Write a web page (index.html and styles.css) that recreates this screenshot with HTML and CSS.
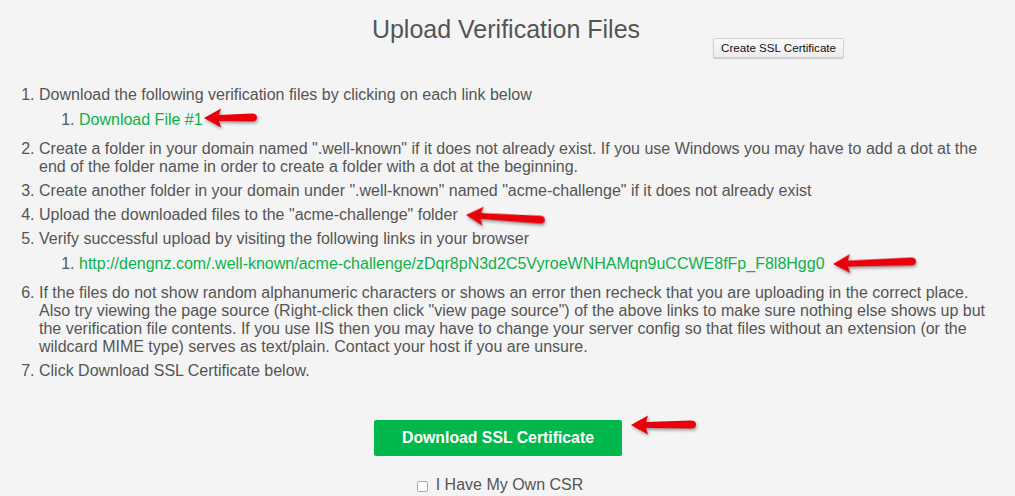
FILE: index.html
```html
<!DOCTYPE html>
<html>
<head>
<meta charset="utf-8">
<link rel="stylesheet" href="styles.css">
</head>
<body>
<div class="page">
  <header class="header">
    <div class="spacer"></div>
    <h1 class="title">Upload Verification Files</h1>
    <div class="side"><button class="btn-small">Create SSL Certificate</button></div>
  </header>

  <ol class="steps">
    <li>Download the following verification files by clicking on each link below
      <ol class="sub">
        <li><a class="link" href="#">Download File #1</a></li>
      </ol>
    </li>
    <li>Create a folder in your domain named ".well-known" if it does not already exist. If you use Windows you may have to add a dot at the end of the folder name in order to create a folder with a dot at the beginning.</li>
    <li>Create another folder in your domain under ".well-known" named "acme-challenge" if it does not already exist</li>
    <li>Upload the downloaded files to the "acme-challenge" folder</li>
    <li>Verify successful upload by visiting the following links in your browser
      <ol class="sub">
        <li><a class="link" href="#">http://dengnz.com/.well-known/acme-challenge/zDqr8pN3d2C5VyroeWNHAMqn9uCCWE8fFp_F8l8Hgg0</a></li>
      </ol>
    </li>
    <li>If the files do not show random alphanumeric characters or shows an error then recheck that you are uploading in the correct place. Also try viewing the page source (Right-click then click "view page source") of the above links to make sure nothing else shows up but the verification file contents. If you use IIS then you may have to change your server config so that files without an extension (or the wildcard MIME type) serves as text/plain. Contact your host if you are unsure.</li>
    <li>Click Download SSL Certificate below.</li>
  </ol>

  <div class="actions">
    <button class="btn-green">Download SSL Certificate</button>
    <label class="csr"><input type="checkbox" class="check"> I Have My Own CSR</label>
  </div>

  <svg class="arrow a1" width="56" height="24" viewBox="0 0 56 24"><path d="M1 12 L18 2.5 L16 9 L49 7.5 Q54 7.5 54 11.5 Q54 15.5 49 15.5 L16 15 L18 21.5 Z"/></svg>
  <svg class="arrow a2" width="82" height="24" viewBox="0 0 82 24"><path d="M1 12 L18 2.5 L16 9 L75 7.5 Q80 7.5 80 11.5 Q80 15.5 75 15.5 L16 15 L18 21.5 Z"/></svg>
  <svg class="arrow a3" width="86" height="24" viewBox="0 0 86 24"><path d="M1 12 L18 2.5 L16 9 L79 7.5 Q84 7.5 84 11.5 Q84 15.5 79 15.5 L16 15 L18 21.5 Z"/></svg>
  <svg class="arrow a4" width="68" height="24" viewBox="0 0 68 24"><path d="M1 12 L18 2.5 L16 9 L61 7.5 Q66 7.5 66 11.5 Q66 15.5 61 15.5 L16 15 L18 21.5 Z"/></svg>
</div>
</body>
</html>
```

FILE: styles.css
```css
* { box-sizing: border-box; }
html, body {
  margin: 0;
  padding: 0;
  background: #f4f4f4;
}
body {
  font-family: "Liberation Sans", Arial, Helvetica, sans-serif;
  color: #555;
}
.page {
  position: relative;
  width: 1015px;
  height: 496px;
  overflow: hidden;
}
.header {
  display: grid;
  grid-template-columns: 1fr auto 1fr;
  height: 86px;
}
.title {
  margin: 14px 0 0 -3px;
  font-size: 25px;
  font-weight: normal;
  line-height: 30px;
  color: #555;
}
.side {
  padding: 38px 0 0 73px;
}
.btn-small {
  font-family: "Liberation Sans", Arial, sans-serif;
  font-size: 11.6px;
  color: #111;
  height: 20px;
  padding: 0 7px;
  background: linear-gradient(#fafafa, #ececec);
  border: 1px solid #d2d2d2;
  border-radius: 2px;
  box-shadow: 0 1px 1px rgba(0,0,0,0.18);
  line-height: 18px;
}
.steps {
  margin: 0;
  padding: 0 15px 0 39px;
  font-size: 16px;
  line-height: 18px;
}
.steps > li + li { margin-top: 6px; }
.sub {
  margin: 7px 0 11px;
  padding-left: 40px;
}
.link {
  color: #0db14b;
  text-decoration: none;
}
.actions {
  display: flex;
  flex-direction: column;
  align-items: center;
  padding-top: 40px;
}
.btn-green {
  margin-right: 19px;
  width: 248px;
  height: 36px;
  background: #00b84c;
  border: none;
  border-radius: 2px;
  color: #fff;
  font-family: "Liberation Sans", Arial, sans-serif;
  font-size: 15.8px;
  font-weight: bold;
}
.csr {
  margin-top: 20px;
  margin-right: 15px;
  display: flex;
  align-items: center;
  font-size: 16px;
  line-height: 18px;
  color: #555;
}
.check {
  appearance: none;
  -webkit-appearance: none;
  width: 11px;
  height: 11px;
  margin: 2px 8px 0 0;
  border: 1px solid #a8a8a8;
  border-radius: 2px;
  background: #fff;
}
.arrow {
  position: absolute;
  overflow: visible;
  filter: drop-shadow(1px 2px 1.5px rgba(0,0,0,0.35));
}
.arrow path { fill: #e8000b; }
.a1 { left: 203px; top: 106px; }
.a2 { left: 465px; top: 203px; transform: rotate(4deg); transform-origin: 1px 12px; }
.a3 { left: 832px; top: 252px; transform: rotate(-1.5deg); transform-origin: 1px 12px; }
.a4 { left: 630px; top: 413px; }
```
